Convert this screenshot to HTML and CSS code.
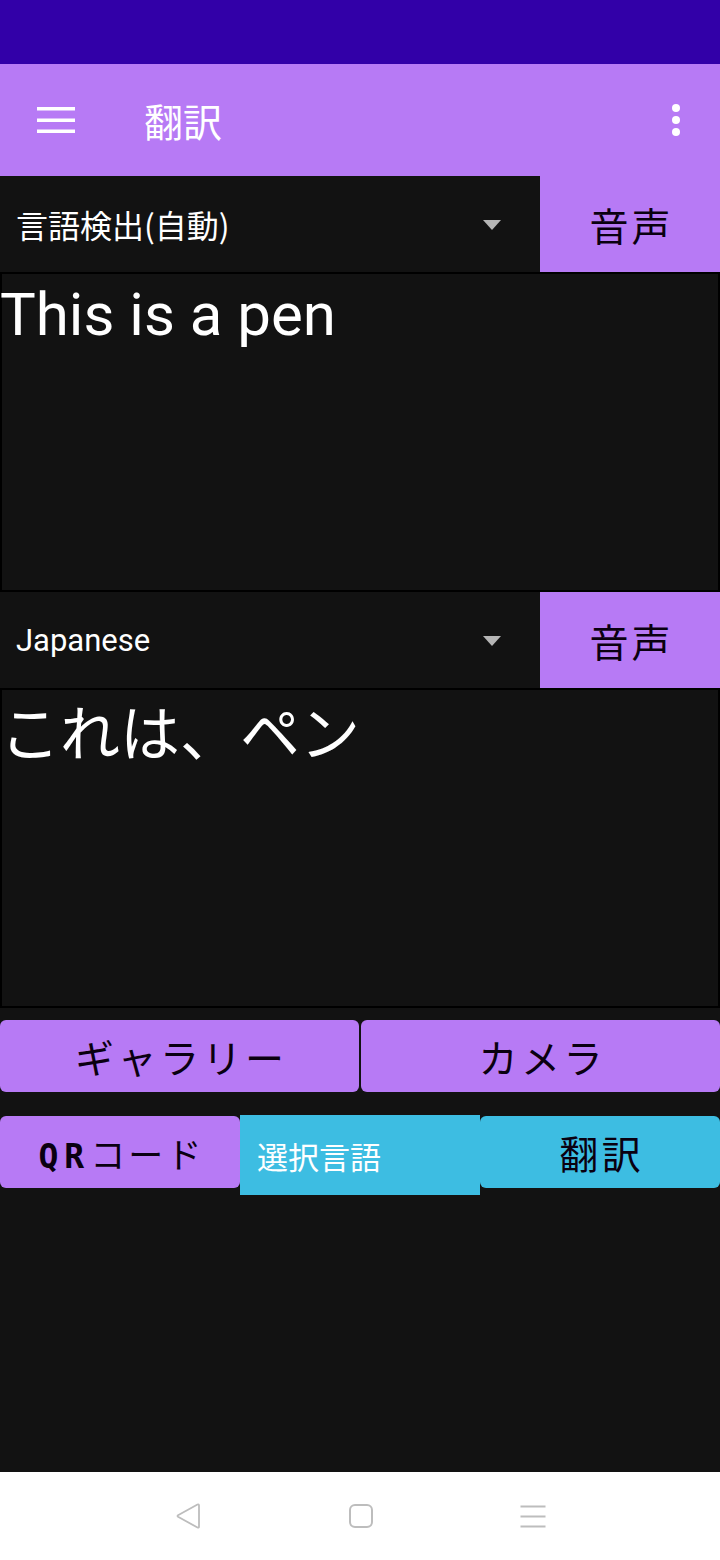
FILE: index.html
```html
<!DOCTYPE html>
<html lang="ja">
<head>
<meta charset="utf-8">
<title>翻訳</title>
<link rel="stylesheet" href="styles.css">
</head>
<body>
<div class="screen">
  <div class="statusbar"></div>
  <header class="appbar">
    <svg class="menu-icon" width="48" height="48" viewBox="0 0 48 48" aria-hidden="true">
      <rect x="5" y="11" width="38" height="3.5" fill="#fff"/>
      <rect x="5" y="22.5" width="38" height="3.5" fill="#fff"/>
      <rect x="5" y="33.5" width="38" height="3.5" fill="#fff"/>
    </svg>
    <h1 class="title">翻訳</h1>
    <svg class="more-icon" width="16" height="40" viewBox="0 0 16 40" aria-hidden="true">
      <circle cx="8" cy="8" r="4" fill="#fff"/>
      <circle cx="8" cy="20" r="4" fill="#fff"/>
      <circle cx="8" cy="32" r="4" fill="#fff"/>
    </svg>
  </header>

  <section class="lang-row">
    <div class="spinner">
      <span class="spinner-text cjk">言語検出(自動)</span>
      <span class="caret"></span>
    </div>
    <button class="speak">音声</button>
  </section>
  <div class="textbox">
    <p class="src-text">This is a pen</p>
  </div>

  <section class="lang-row">
    <div class="spinner">
      <span class="spinner-text latin">Japanese</span>
      <span class="caret"></span>
    </div>
    <button class="speak">音声</button>
  </section>
  <div class="textbox">
    <p class="dst-text">これは、ペン</p>
  </div>

  <div class="btn-row first">
    <button class="btn purple">ギャラリー</button>
    <button class="btn purple">カメラ</button>
  </div>
  <div class="btn-row second">
    <button class="btn purple qr"><span class="qr-latin">QR</span>コード</button>
    <div class="select-lang">選択言語</div>
    <button class="btn cyan translate">翻訳</button>
  </div>

  <div class="fill"></div>

  <nav class="navbar">
    <svg class="nav-icon" width="28" height="28" viewBox="0 0 28 28" aria-hidden="true">
      <path d="M22.5 2.5 L3 13.2 Q2 14 3 14.8 L22.5 25.5 Q24 26.2 24 24.5 V3.5 Q24 1.8 22.5 2.5 Z" fill="none" stroke="#bdbdbd" stroke-width="1.8" stroke-linejoin="round"/>
    </svg>
    <svg class="nav-icon" width="28" height="28" viewBox="0 0 28 28" aria-hidden="true">
      <rect x="3" y="3" width="22" height="22" rx="5" fill="none" stroke="#bdbdbd" stroke-width="2"/>
    </svg>
    <svg class="nav-icon" width="28" height="28" viewBox="0 0 28 28" aria-hidden="true">
      <rect x="1.5" y="3.5" width="25" height="2" fill="#bdbdbd"/>
      <rect x="1.5" y="13.5" width="25" height="2" fill="#bdbdbd"/>
      <rect x="1.5" y="23.5" width="25" height="2" fill="#bdbdbd"/>
    </svg>
  </nav>
</div>
</body>
</html>
```

FILE: styles.css
```css
html, body {
  margin: 0;
  padding: 0;
  background: #121212;
}

.screen {
  width: 720px;
  height: 1560px;
  display: flex;
  flex-direction: column;
  background: #121212;
  font-family: Roboto, "Noto Sans CJK JP", sans-serif;
  overflow: hidden;
}

.statusbar {
  height: 64px;
  flex: none;
  background: #3200a8;
}

.appbar {
  height: 112px;
  flex: none;
  background: #b77af5;
  display: flex;
  align-items: center;
  padding: 0 36px 0 32px;
}

.menu-icon {
  flex: none;
}

.title {
  margin: 0 0 0 64px;
  flex: 1;
  font-family: "Noto Sans CJK JP", sans-serif;
  font-weight: 400;
  font-size: 39px;
  color: #fff;
  line-height: 1;
}

.more-icon {
  flex: none;
}

.lang-row {
  height: 96px;
  flex: none;
  display: flex;
}

.spinner {
  flex: 1;
  display: flex;
  align-items: center;
  padding: 0 0 0 16px;
  position: relative;
  color: #fff;
}

.spinner-text {
  white-space: nowrap;
}

.spinner-text.cjk {
  font-family: "Noto Sans CJK JP", sans-serif;
  font-size: 32px;
}

.spinner-text.latin {
  font-family: Roboto, sans-serif;
  font-size: 31px;
}

.caret {
  position: absolute;
  right: 39px;
  top: 44px;
  width: 0;
  height: 0;
  border-left: 9.5px solid transparent;
  border-right: 9.5px solid transparent;
  border-top: 10px solid #b5b5b5;
}

.speak {
  width: 180px;
  flex: none;
  border: 0;
  margin: 0;
  padding: 0;
  background: #b77af5;
  color: #0a0010;
  font-family: "Noto Sans CJK JP", sans-serif;
  font-size: 39px;
  letter-spacing: 3px;
  text-indent: 3px;
}

.textbox {
  height: 320px;
  flex: none;
  box-sizing: border-box;
  border: 2px solid #000;
  background: #121212;
}

.src-text {
  margin: 0 0 0 -2px;
  padding-top: 6px;
  font-family: Roboto, sans-serif;
  font-size: 60px;
  line-height: 70px;
  color: #fff;
}

.dst-text {
  margin: 0 0 0 -2px;
  padding: 0;
  font-family: "Noto Sans CJK JP", sans-serif;
  font-size: 60px;
  line-height: 80px;
  color: #fff;
  white-space: nowrap;
}

.btn-row {
  display: flex;
  flex: none;
  align-items: flex-start;
}

.btn-row.first {
  margin-top: 12px;
  gap: 2px;
}

.btn-row.second {
  margin-top: 23px;
  height: 80px;
}

.btn {
  border: 0;
  margin: 0;
  padding: 0;
  border-radius: 6px;
  height: 72px;
  font-family: "Noto Sans CJK JP", sans-serif;
  font-weight: 400;
  color: #0a0010;
  letter-spacing: 0.09em;
  text-indent: 0.09em;
}

.btn.purple {
  background: #b77af5;
}

.btn.cyan {
  background: #3dbde2;
}

.btn-row.first .btn {
  flex: 1;
  font-size: 39px;
}

.qr {
  width: 240px;
  margin-top: 1px;
  font-size: 35px;
}

.qr-latin {
  font-family: "DejaVu Sans Mono", Roboto, sans-serif;
  font-weight: 700;
  font-size: 33px;
  letter-spacing: 0.18em;
}

.select-lang {
  width: 240px;
  height: 80px;
  box-sizing: border-box;
  background: #3dbde2;
  color: #fff;
  display: flex;
  align-items: center;
  padding-left: 17px;
  font-family: "Noto Sans CJK JP", sans-serif;
  font-size: 31px;
}

.translate {
  width: 240px;
  margin-top: 1px;
  font-size: 39px;
}

.fill {
  flex: 1;
}

.navbar {
  height: 88px;
  flex: none;
  background: #fff;
  display: flex;
  align-items: center;
  justify-content: center;
  gap: 144px;
  padding-left: 1px;
}

.nav-icon {
  flex: none;
}
```
